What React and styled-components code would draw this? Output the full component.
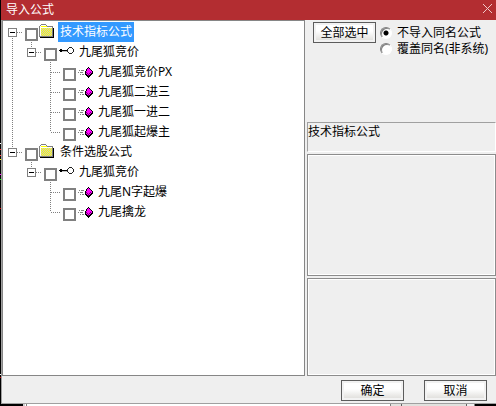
import React, { useState } from "react";
import styled, { createGlobalStyle } from "styled-components";

const groups = [
  {
    name: "技术指标公式",
    folder: "九尾狐竞价",
    items: ["九尾狐竞价PX", "九尾狐二进三", "九尾狐一进二", "九尾狐起爆主"],
  },
  {
    name: "条件选股公式",
    folder: "九尾狐竞价",
    items: ["九尾N字起爆", "九尾擒龙"],
  },
];

// every second pixel of the folder's front
const folderDots = [4, 5, 6, 7, 8, 9, 10, 11]
  .map((y) => {
    const start = y % 2 ? 2 : 1;
    return [0, 2, 4, 6, 8, 10]
      .filter((x) => start + x < 13)
      .map((x) => `M${start + x} ${y}h1v1h-1z`)
      .join("");
  })
  .join("");

const FolderIcon = () => (
  <Icon viewBox="0 0 16 16" aria-hidden="true">
    <path d="M14 4h1v10H1v-1h13z" fill="#000" />
    <path d="M2 0h5v1h1v1h6v11H0V2h1V1h1z" fill="#808080" />
    <path d="M2 1h5v1h1v1h5v9H1V2h1z" fill="#ff0" />
    <path d={folderDots} fill="#c8c8c8" />
    <path d="M2 1h5v1H2zM1 3h12v1H1zM1 2h1v10H1z" fill="#fff" />
  </Icon>
);

const KeyIcon = () => (
  <Icon viewBox="0 0 16 16" aria-hidden="true">
    <path d="M2 5h2v1h5v1H4v1H2V7H1V6h1z" fill="#000" />
    <path d="M4 7h5v1H4z" fill="#c0c0c0" />
    <path
      d="M11 3h3v1h-3zM11 9h3v1h-3zM10 4h1v1h-1zM14 4h1v1h-1zM10 8h1v1h-1zM14 8h1v1h-1zM9 5h1v3H9zM15 5h1v3h-1z"
      fill="#222"
    />
  </Icon>
);

const DiamondIcon = () => (
  <Icon viewBox="0 0 16 16" aria-hidden="true">
    <path d="M2 6h1v1H2zM4 6h3v1H4zM1 8h1v1H1zM3 8h3v1H3zM3 10h1v1H3zM5 10h2v1H5z" fill="#808080" />
    <path
      d="M11 3h1v1h1v1h1v1h1v1h1v3h-1v1h-1v1h-1v1h-1v1h-1v-1h-1v-1H9v-1H8V7h1V5h1V4h1z"
      fill="#000"
    />
    <path d="M11 4h1v1h1v1h1v1h1v2h-1v1h-1v1h-1v1h-1v-1h-1v-1H9V7h1V5h1z" fill="#f0f" />
    <path d="M9 8h1v1H9zM10 9h1v1h-1zM11 10h1v2h-1zM12 9h1v1h-1zM13 8h1v1h-1z" fill="#707" />
  </Icon>
);

const TreeRow = ({ name, guides, icon, open, onToggle, selected, onSelect }) => {
  return (
    <Row role="treeitem" aria-selected={selected} aria-expanded={open}>
      {guides.map((guide, index) => (
        <Guide key={index} $line={guide}>
          {onToggle && index === guides.length - 1 && (
            <Expander aria-label={name} onClick={onToggle} $open={open} />
          )}
        </Guide>
      ))}
      <Check type="checkbox" aria-label={name} />
      {icon}
      <Label $selected={selected} onClick={onSelect}>
        {name}
      </Label>
    </Row>
  );
};

const App = () => {
  const [selected, setSelected] = useState("0");
  const [closed, setClosed] = useState({});

  const rowProps = (id, name) => ({
    name,
    selected: selected === id,
    onSelect: () => setSelected(id),
  });
  const toggleProps = (id) => ({
    open: !closed[id],
    onToggle: () => setClosed({ ...closed, [id]: !closed[id] }),
  });

  return (
    <Screen>
      <GlobalStyle />
      <Dialog>
        <TitleBar>
          <h1>导入公式</h1>
          <CloseButton aria-label="关闭">
            <svg width="9" height="9" viewBox="0 0 9 9" aria-hidden="true">
              <path d="M0 0l9 9M9 0l-9 9" stroke="#f0c8c8" />
            </svg>
          </CloseButton>
        </TitleBar>
        <Content>
          <Tree role="tree">
            {groups.map((group, index) => {
              const last = index === groups.length - 1;
              const trunk = last ? "none" : "full";
              const id = `${index}`;
              return (
                <React.Fragment key={id}>
                  <TreeRow
                    {...rowProps(id, group.name)}
                    {...toggleProps(id)}
                    guides={[last ? "end" : "start"]}
                    icon={<FolderIcon />}
                  />
                  {!closed[id] && (
                    <TreeRow
                      {...rowProps(`${id}-f`, group.folder)}
                      {...toggleProps(`${id}-f`)}
                      guides={[trunk, "end"]}
                      icon={<KeyIcon />}
                    />
                  )}
                  {!closed[id] &&
                    !closed[`${id}-f`] &&
                    group.items.map((item, i) => (
                      <TreeRow
                        key={item}
                        {...rowProps(`${id}-${i}`, item)}
                        guides={[trunk, "none", i === group.items.length - 1 ? "end" : "tee"]}
                        icon={<DiamondIcon />}
                      />
                    ))}
                </React.Fragment>
              );
            })}
          </Tree>
          <Side>
            <Options>
              <Button>全部选中</Button>
              <RadioGroup>
                <RadioLabel>
                  <Radio name="mode" defaultChecked />
                  不导入同名公式
                </RadioLabel>
                <RadioLabel>
                  <Radio name="mode" />
                  覆盖同名(非系统)
                </RadioLabel>
              </RadioGroup>
            </Options>
            <Description>技术指标公式</Description>
            <Panel $grow={122} />
            <Panel $grow={98} />
          </Side>
        </Content>
        <Footer>
          <Button>确定</Button>
          <Button>取消</Button>
        </Footer>
      </Dialog>
      <Backdrop>
        <BackdropPane />
        <BackdropButton />
        <BackdropGap />
      </Backdrop>
    </Screen>
  );
};

export default App;

const GlobalStyle = createGlobalStyle`
  * {
    box-sizing: border-box;
  }
  body {
    margin: 0;
    background: #000;
  }
  body, button {
    font-family: "Noto Sans", "Noto Sans CJK SC", sans-serif;
    font-size: 12px;
    color: #000;
  }
`;

/* the chart behind the dialog shows through in the first pixel column */
const speck = (y, color) => `linear-gradient(${color}, ${color}) 0 ${y}px / 1px 1px no-repeat`;

const Screen = styled.div`
  display: flex;
  flex-direction: column;
  min-height: 100vh;
  padding-left: 1px;
  background: ${[
    speck(143, "#fff"),
    speck(149, "#f33"),
    speck(155, "#f33"),
    speck(159, "#ff0"),
    speck(174, "#f0f"),
    speck(179, "#0f0"),
    speck(208, "#c00"),
    speck(374, "#fff"),
    speck(377, "#c00"),
  ].join(", ")}, #000;
`;

const Dialog = styled.main`
  display: flex;
  flex: 1;
  flex-direction: column;
  background: #efefef;
  border-bottom: 1px solid #a0a0a0;
`;

const TitleBar = styled.header`
  display: flex;
  align-items: center;
  justify-content: space-between;
  height: 20px;
  padding: 0 4px 0 5px;
  background: #b32d31;

  h1 {
    margin: 0;
    font-size: 12px;
    font-weight: normal;
    line-height: 16px;
    color: #fff;
  }
`;

const CloseButton = styled.button`
  display: flex;
  padding: 0 0 4px;
  border: none;
  background: none;
`;

const Content = styled.div`
  display: flex;
  flex: 1;
  gap: 2px;
  border-left: 1px solid #a0a0a0;
`;

const Tree = styled.div`
  flex: 301;
  padding-top: 1px;
  border: 1px solid #868686;
  background: #fff;
`;

const Row = styled.div`
  display: flex;
  height: 20px;
`;

const dotsDown = "repeating-linear-gradient(#808080 0 1px, transparent 1px 2px)";
const dotsAcross = "repeating-linear-gradient(90deg, transparent 0 1px, #808080 1px 2px)";
const guideLines = {
  none: "none",
  full: `${dotsDown} 9px 0 / 1px 20px no-repeat`,
  start: `${dotsDown} 9px 10px / 1px 10px no-repeat, ${dotsAcross} 9px 10px / 13px 1px no-repeat`,
  end: `${dotsDown} 9px 0 / 1px 10px no-repeat, ${dotsAcross} 9px 10px / 13px 1px no-repeat`,
  tee: `${dotsDown} 9px 0 / 1px 20px no-repeat, ${dotsAcross} 9px 10px / 13px 1px no-repeat`,
};

const Guide = styled.span`
  width: 19px;
  padding: 6px 5px;
  background: ${(props) => guideLines[props.$line]};
`;

const Expander = styled.button`
  display: block;
  width: 9px;
  height: 9px;
  padding: 0;
  border: 1px solid #808080;
  background: ${(props) => (props.$open ? "" : "linear-gradient(#000, #000) 3px 1px / 1px 5px no-repeat,")}
    linear-gradient(#000, #000) 1px 3px / 5px 1px no-repeat, #fff;
`;

const Check = styled.input`
  appearance: none;
  width: 13px;
  height: 13px;
  margin: 6px 1px 0 3px;
  border: 2px solid #808080;
  background: #fff;

  &:checked {
    background: radial-gradient(#000 3px, #fff 4px);
  }
`;

const Icon = styled.svg`
  width: 16px;
  height: 16px;
  margin-top: 2px;
  shape-rendering: crispEdges;
`;

const Label = styled.span`
  margin-left: 3px;
  padding: 0 2px;
  line-height: 20px;
  white-space: nowrap;
  cursor: default;
  color: ${(props) => (props.$selected ? "#fff" : "#000")};
  background: ${(props) => (props.$selected ? "#3399ff" : "transparent")};
`;

const Side = styled.aside`
  display: flex;
  flex: 189;
  flex-direction: column;
`;

const Options = styled.div`
  display: flex;
  align-items: flex-start;
  gap: 4px;
  height: 102px;
  padding: 2px 0 0 6px;
`;

const Button = styled.button`
  width: 63px;
  height: 21px;
  padding: 2px;
  border: 1px solid #5c5c5c;
  background: linear-gradient(#fff 40%, #e2e1de) content-box, #f2f2f2;
  line-height: 15px;
  white-space: nowrap;
`;

const RadioGroup = styled.div`
  padding-top: 3px;
`;

const RadioLabel = styled.label`
  display: flex;
  align-items: center;
  gap: 5px;
  height: 16px;
  line-height: 16px;
  white-space: nowrap;
`;

const Radio = styled.input.attrs({ type: "radio" })`
  appearance: none;
  width: 12px;
  height: 12px;
  margin: 0;
  border: 1px solid;
  border-color: #808080 #fff #fff #808080;
  border-radius: 50%;
  background: #fff;
  box-shadow: inset 1px 1px 0 #808080;

  &:checked {
    background: radial-gradient(circle, #000 2px, #fff 3px);
  }
`;

const Description = styled.div`
  height: 30px;
  border: 1px solid;
  border-color: #a0a0a0 #fff #fff #a0a0a0;
  line-height: 18px;
`;

const Panel = styled.section`
  flex: ${(props) => props.$grow};
  margin-top: 2px;
  border: 1px solid #8c8c8c;
  box-shadow: inset 0 0 0 1px #fff;
`;

const Footer = styled.footer`
  display: flex;
  justify-content: flex-end;
  gap: 20px;
  padding: 4px 9px 2px;
  border-left: 1px solid #a0a0a0;
`;

/* strip of the window underneath */
const Backdrop = styled.div`
  display: flex;
  height: 2px;
  padding: 0 21px 0 22px;
`;

const BackdropPane = styled.span`
  flex: 1;
  border-left: 2px solid #d0d0d0;
  border-right: 1px solid #808080;
  background: linear-gradient(#808080, #808080) 1px 0 / 1px 2px no-repeat, #fff;
`;

const BackdropButton = styled.span`
  width: 76px;
  border-right: 1px solid #606060;
  background: linear-gradient(#606060, #606060) 10px 0 / 1px 2px no-repeat, #e2e1de;
`;

const BackdropGap = styled.span`
  width: 8px;
  border-right: 1px solid #808080;
  background: #efefef;
`;
